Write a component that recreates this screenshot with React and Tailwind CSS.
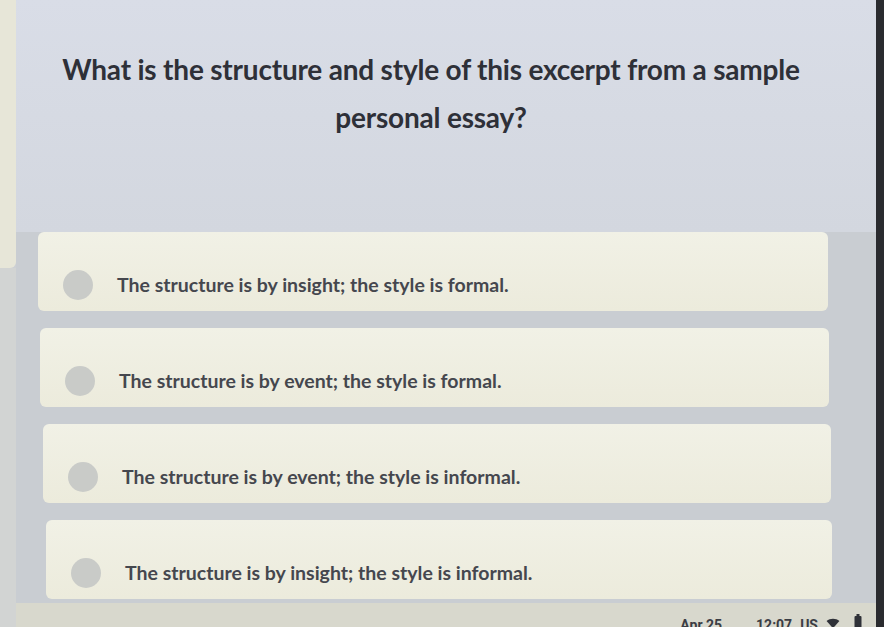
import React from 'react';

const options = [
  { text: 'The structure is by insight; the style is formal.', shift: 'ml-[22px] mr-[48px]' },
  { text: 'The structure is by event; the style is formal.', shift: 'ml-[24px] mr-[47px]' },
  { text: 'The structure is by event; the style is informal.', shift: 'ml-[27px] mr-[45px]' },
  { text: 'The structure is by insight; the style is informal.', shift: 'ml-[30px] mr-[44px]' },
];

export default function App() {
  return (
    <div className="w-[884px] h-[627px] overflow-hidden flex bg-[#cdd0d4] font-['Lato','Liberation_Sans',sans-serif]">
      {/* left edge of the window */}
      <div className="w-[16px] flex flex-col">
        <div className="h-[268px] bg-[#e7e6d8] rounded-br-[6px]" />
        <div className="flex-1 bg-[#d2d4d3]" />
      </div>

      <div className="w-[860px] flex flex-col">
        {/* question */}
        <div className="h-[232px] bg-gradient-to-b from-[#d9dde7] to-[#d3d7df] pr-[30px] pt-[45px] text-center">
          <h1 className="text-[28px] leading-[48px] font-bold tracking-[-0.2px] text-[#2e3038]">
            What is the structure and style of this excerpt from a sample
            <br />
            personal essay?
          </h1>
        </div>

        {/* answers */}
        <div className="flex flex-col gap-[17px] bg-[#c9cdd2] pb-[4px]">
          {options.map((o) => (
            <div
              key={o.text}
              className={`h-[79px] ${o.shift} rounded-[6px] bg-gradient-to-b from-[#f1f1e6] to-[#ecebdc] flex items-center pt-[26px] pl-[25px] gap-[24px]`}
            >
              <div className="w-[30px] h-[30px] rounded-full bg-[#c9cbc8]" />
              <span className="text-[19.5px] font-bold text-[#45474e]">{o.text}</span>
            </div>
          ))}
        </div>

        {/* taskbar */}
        <div className="flex-1 bg-[#d8d8cd] overflow-hidden flex justify-end items-start pt-[12px] pr-[14px] text-[14px] font-bold text-[#3b3d44] font-['Roboto','Liberation_Sans',sans-serif]">
          <span className="mr-[34px]">Apr 25</span>
          <span className="mr-[8px]">12:07</span>
          <span className="mr-[8px]">US</span>
          <svg width="14" height="14" viewBox="0 0 24 24" className="mr-[14px] mt-[1px]">
            <path d="M12 21L1 8.5C7 3.5 17 3.5 23 8.5z" fill="#2f3138" />
          </svg>
          <svg width="8" height="16" viewBox="0 0 8 16" className="mt-[-1px]">
            <rect x="2.5" y="0" width="3" height="2" fill="#2f3138" />
            <rect x="0.5" y="2" width="7" height="14" rx="1" fill="#2f3138" />
          </svg>
        </div>
      </div>

      {/* monitor bezel */}
      <div className="w-[8px] bg-[#2a2b2f]" />
    </div>
  );
}
